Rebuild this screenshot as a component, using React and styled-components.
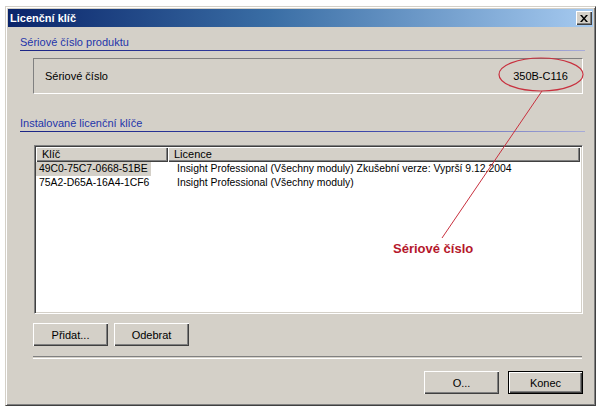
import React from "react";
import styled, { createGlobalStyle } from "styled-components";

const GlobalStyle = createGlobalStyle`
  body {
    margin: 0;
    background: #fff;
    font-family: "Liberation Sans", Arial, sans-serif;
    font-size: 11px;
    color: #000;
  }
`;

const Page = styled.div`
  position: relative;
  width: 606px;
  height: 416px;
  padding: 6px 0 0 5px;
  box-sizing: border-box;
  overflow: hidden;
`;

const Dialog = styled.div`
  width: 591px;
  height: 400px;
  box-sizing: border-box;
  background: #d4d0c8;
  border: 1px solid;
  border-color: #d4d0c8 #404040 #404040 #d4d0c8;
  box-shadow: inset 1px 1px 0 #fff, inset -1px -1px 0 #808080;
  padding: 2px;
  display: flex;
  flex-direction: column;
`;

const TitleBar = styled.div`
  height: 18px;
  display: flex;
  align-items: center;
  justify-content: space-between;
  padding: 0 1px 0 2px;
  background: linear-gradient(to right, #0a246a, #3a6ea5 45%, #a6caf0);
`;

const Title = styled.span`
  color: #fff;
  font-weight: bold;
  font-size: 11px;
`;

const CloseButton = styled.div`
  width: 16px;
  height: 14px;
  box-sizing: border-box;
  background: #d4d0c8;
  box-shadow: inset 1px 1px 0 #fff, inset -1px -1px 0 #404040,
    inset -2px -2px 0 #808080;
  display: flex;
  align-items: center;
  justify-content: center;
`;

const Body = styled.div`
  flex: 1;
  display: flex;
  flex-direction: column;
  padding: 9px 8px 0 12px;
`;

const GroupTitle = styled.div`
  height: 14px;
  margin-top: ${(p) => p.$top || 0}px;
  color: #1f35aa;
  line-height: 13px;
  border-bottom: 1px solid;
  border-image: linear-gradient(to right, #1b2585, #3a45a8 60%, #a8acd8) 1;
`;

const SerialBox = styled.div`
  margin: 7px 2px 0 13px;
  height: 36px;
  box-sizing: border-box;
  border: 1px solid;
  border-color: #808080 #fff #fff #808080;
  display: flex;
  align-items: center;
  justify-content: space-between;
  padding: 0 14px 0 11px;
`;

const ListBox = styled.div`
  margin: 13px 2px 0 14px;
  height: 169px;
  box-sizing: border-box;
  background: #fff;
  border: 1px solid;
  border-color: #808080 #fff #fff #808080;
  box-shadow: inset 1px 1px 0 #404040, inset -1px -1px 0 #d4d0c8;
  padding: 1px;
`;

const ListRow = styled.div`
  display: grid;
  grid-template-columns: 132px 412px;
  height: ${(p) => (p.$header ? 15 : 14)}px;
  line-height: ${(p) => (p.$header ? 15 : 14)}px;
  font-size: ${(p) => (p.$header ? 11 : 10.4)}px;
  white-space: nowrap;
`;

const HeaderCell = styled.div`
  background: #d4d0c8;
  padding-left: 6px;
  box-shadow: inset 1px 1px 0 #fff, inset -1px -1px 0 #404040,
    inset -2px -2px 0 #808080;
`;

const Cell = styled.div`
  padding-left: ${(p) => (p.$first ? 0 : 9)}px;
  overflow: hidden;
`;

const CellText = styled.span`
  display: inline-block;
  padding: 0 3px;
  background: ${(p) => (p.$selected ? "#d4d0c8" : "transparent")};
`;

const ButtonRow = styled.div`
  display: flex;
  margin: ${(p) => p.$top}px 2px 0 13px;
  justify-content: ${(p) => (p.$right ? "flex-end" : "flex-start")};
  gap: ${(p) => (p.$right ? 9 : 6)}px;
`;

const Button = styled.div`
  width: 75px;
  height: 23px;
  box-sizing: border-box;
  background: #d4d0c8;
  display: flex;
  align-items: center;
  justify-content: center;
  border: ${(p) => (p.$default ? "1px solid #000" : "none")};
  box-shadow: inset 1px 1px 0 #fff, inset -1px -1px 0 #404040,
    inset -2px -2px 0 #808080;
`;

const Separator = styled.div`
  margin: 10px 3px 0 13px;
  height: 1px;
  border-top: 1px solid #808080;
  border-bottom: 1px solid #fff;
`;

const Overlay = styled.svg`
  position: absolute;
  left: 0;
  top: 0;
  pointer-events: none;
`;

const Callout = styled.div`
  position: absolute;
  left: 393px;
  top: 241px;
  color: #b5172b;
  font-weight: bold;
  font-size: 13px;
  line-height: 15px;
`;

const keys = [
  {
    key: "49C0-75C7-0668-51BE",
    licence:
      "Insight Professional (Všechny moduly) Zkušební verze: Vyprší 9.12.2004",
    selected: true,
  },
  { key: "75A2-D65A-16A4-1CF6", licence: "Insight Professional (Všechny moduly)" },
];

export default function App() {
  return (
    <>
      <GlobalStyle />
      <Page>
        <Dialog>
          <TitleBar>
            <Title>Licenční klíč</Title>
            <CloseButton>
              <svg width="8" height="7" viewBox="0 0 8 7">
                <path d="M0 0h2l2 2.5L6 0h2L5 3.5 8 7H6L4 4.5 2 7H0l3-3.5z" fill="#000" />
              </svg>
            </CloseButton>
          </TitleBar>
          <Body>
            <GroupTitle>Sériové číslo produktu</GroupTitle>
            <SerialBox>
              <span>Sériové číslo</span>
              <span>350B-C116</span>
            </SerialBox>

            <GroupTitle $top={23}>Instalované licenční klíče</GroupTitle>
            <ListBox>
              <ListRow $header>
                <HeaderCell>Klíč</HeaderCell>
                <HeaderCell>Licence</HeaderCell>
              </ListRow>
              {keys.map((k) => (
                <ListRow key={k.key}>
                  <Cell $first>
                    <CellText $selected={k.selected}>{k.key}</CellText>
                  </Cell>
                  <Cell>{k.licence}</Cell>
                </ListRow>
              ))}
            </ListBox>

            <ButtonRow $top={9}>
              <Button>Přidat...</Button>
              <Button>Odebrat</Button>
            </ButtonRow>
            <Separator />
            <ButtonRow $top={12} $right>
              <Button>O...</Button>
              <Button $default>Konec</Button>
            </ButtonRow>
          </Body>
        </Dialog>

        <Overlay width="606" height="416">
          <ellipse cx="541" cy="74.5" rx="42" ry="16.5" fill="none" stroke="#c8303e" strokeWidth="1.2" />
          <line x1="542" y1="91" x2="442" y2="238" stroke="#c8303e" strokeWidth="1" />
        </Overlay>
        <Callout>Sériové číslo</Callout>
      </Page>
    </>
  );
}
